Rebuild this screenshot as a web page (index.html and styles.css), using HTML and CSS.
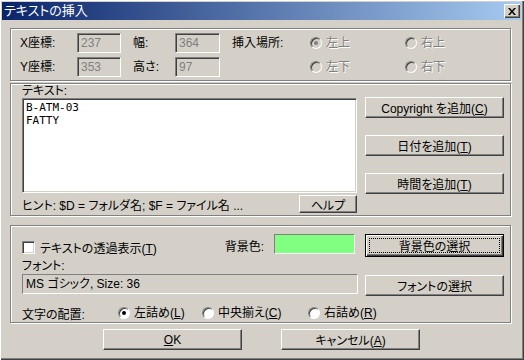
FILE: index.html
```html
<!DOCTYPE html>
<html lang="ja">
<head>
<meta charset="utf-8">
<title>テキストの挿入</title>
<link rel="stylesheet" href="styles.css">
</head>
<body>
<div class="window">
  <div class="titlebar">
    <span class="title">テキストの挿入</span>
    <span class="close"><svg width="8" height="7" viewBox="0 0 8 7"><path d="M0 0h2l2 2.5L6 0h2L5 3.5 8 7H6L4 4.5 2 7H0l3-3.5z" fill="#000"/></svg></span>
  </div>
  <div class="content">
    <div class="group pos">
      <span class="lbl">X座標:</span>
      <span class="edit disabled">237</span>
      <span></span>
      <span class="lbl">幅:</span>
      <span class="edit disabled">364</span>
      <span></span>
      <span class="lbl">挿入場所:</span>
      <span class="radio-item dis"><span class="radio checked"></span><span>左上</span></span>
      <span class="radio-item dis"><span class="radio"></span><span>右上</span></span>

      <span class="lbl">Y座標:</span>
      <span class="edit disabled">353</span>
      <span></span>
      <span class="lbl">高さ:</span>
      <span class="edit disabled">97</span>
      <span></span>
      <span></span>
      <span class="radio-item dis"><span class="radio"></span><span>左下</span></span>
      <span class="radio-item dis"><span class="radio"></span><span>右下</span></span>
    </div>

    <div class="group textgrp">
      <div class="leftcol">
        <div class="lbl-row">テキスト:</div>
        <div class="textbox">B-ATM-03
FATTY</div>
        <div class="hint-row">
          <span>ヒント: $D = フォルダ名; $F = ファイル名 ...</span>
          <span class="btn help">ヘルプ</span>
        </div>
      </div>
      <div class="rightcol">
        <span class="btn wide"><span>Copyright を追加(<u>C</u>)</span></span>
        <span class="btn wide"><span>日付を追加(<u>T</u>)</span></span>
        <span class="btn wide"><span>時間を追加(<u>T</u>)</span></span>
      </div>
    </div>

    <div class="group optgrp">
      <div class="row row1">
        <div class="left l1">
          <span class="checkbox"></span>
          <span class="cblabel">テキストの透過表示(<u>T</u>)</span>
          <span class="bglabel">背景色:</span>
          <span class="swatch"></span>
        </div>
        <span class="btn wide default"><span class="focus">背景色の選択</span></span>
      </div>
      <div class="fontlabel">フォント:</div>
      <div class="row row3">
        <div class="fontbox">MS ゴシック, Size: 36</div>
        <span class="btn wide fontbtn">フォントの選択</span>
      </div>
      <div class="row row4">
        <span class="alignlbl">文字の配置:</span>
        <span class="radio-item a1"><span class="radio checked"></span><span>左詰め(<u>L</u>)</span></span>
        <span class="radio-item a2"><span class="radio"></span><span>中央揃え(<u>C</u>)</span></span>
        <span class="radio-item"><span class="radio"></span><span>右詰め(<u>R</u>)</span></span>
      </div>
    </div>

    <div class="actions">
      <span class="btn wide"><span><u>O</u>K</span></span>
      <span class="btn wide"><span>キャンセル(<u>A</u>)</span></span>
    </div>
  </div>
</div>
</body>
</html>
```
FILE: styles.css
```css
html, body {
  margin: 0;
  padding: 0;
}
body {
  width: 524px;
  height: 360px;
  overflow: hidden;
  background: #d4d0c8;
  font-family: "Liberation Sans", "Noto Sans CJK JP", sans-serif;
  font-size: 12px;
  font-feature-settings: "palt";
  color: #000;
}
.window {
  box-sizing: border-box;
  width: 524px;
  height: 360px;
  padding: 2px 3px 3px 2px;
  background: #d4d0c8;
  box-shadow: inset 1px 1px #fff, inset -1px -1px #404040, inset -2px -2px #808080;
}
.titlebar {
  height: 18px;
  display: flex;
  align-items: center;
  justify-content: space-between;
  padding: 0 1px 0 2px;
  background: linear-gradient(to right, #0a246a, #a6caf0);
  color: #fff;
}
.title {
  font-size: 13px;
  line-height: 18px;
}
.close {
  box-sizing: border-box;
  width: 16px;
  height: 14px;
  background: #d4d0c8;
  display: flex;
  align-items: center;
  justify-content: center;
  box-shadow: inset 1px 1px #fff, inset -1px -1px #404040, inset -2px -2px #808080;
}
.content {
  padding: 8px 10px 0 8px;
}
.group {
  box-sizing: border-box;
  border: 1px solid #808080;
  box-shadow: inset 1px 1px #fff, 1px 1px #fff;
}
.pos {
  height: 53px;
  display: grid;
  grid-template-columns: 57px 44px 12px 42px 45px 12px 78px 95px 95px;
  grid-template-rows: 20px 20px;
  row-gap: 4px;
  padding: 4px 0 0 9px;
  align-items: center;
}
.lbl {
  line-height: 14px;
}
.edit {
  box-sizing: border-box;
  height: 20px;
  line-height: 18px;
  padding-left: 3px;
  border: 1px solid;
  border-color: #808080 #fff #fff #808080;
  box-shadow: inset 1px 1px #404040, inset -1px -1px #d4d0c8;
  background: #fff;
}
.edit.disabled {
  background: #d4d0c8;
  color: #808080;
}
.radio-item {
  display: flex;
  align-items: center;
  gap: 4px;
  line-height: 14px;
  white-space: nowrap;
}
.radio-item.dis {
  color: #808080;
  text-shadow: 1px 1px #fff;
}
.radio {
  box-sizing: border-box;
  width: 12px;
  height: 12px;
  border-radius: 50%;
  border: 1px solid;
  border-color: #808080 #fff #fff #808080;
  box-shadow: inset 1px 1px #404040;
  background: #fff;
  display: flex;
  align-items: center;
  justify-content: center;
  flex: none;
}
.dis .radio {
  background: #d4d0c8;
}
.radio.checked::before {
  content: "";
  width: 4px;
  height: 4px;
  border-radius: 50%;
  background: #000;
}
.dis .radio.checked::before {
  background: #808080;
}

.textgrp {
  margin-top: 2px;
  height: 133px;
  display: flex;
  padding: 1px 6px 0 11px;
  gap: 8px;
}
.leftcol {
  width: 335px;
  display: flex;
  flex-direction: column;
}
.lbl-row {
  height: 13px;
  line-height: 13px;
}
.textbox {
  box-sizing: border-box;
  height: 95px;
  background: #fff;
  border: 1px solid;
  border-color: #808080 #fff #fff #808080;
  box-shadow: inset 1px 1px #404040, inset -1px -1px #d4d0c8;
  padding: 2px 3px;
  font-family: "DejaVu Sans Mono", monospace;
  font-size: 11px;
  line-height: 13px;
  white-space: pre;
  font-feature-settings: normal;
}
.hint-row {
  margin-top: 2px;
  height: 18px;
  display: flex;
  align-items: center;
  justify-content: space-between;
}
.btn {
  box-sizing: border-box;
  height: 21px;
  display: flex;
  align-items: center;
  justify-content: center;
  background: #d4d0c8;
  border: 1px solid;
  border-color: #fff #404040 #404040 #fff;
  box-shadow: inset -1px -1px #808080;
  white-space: nowrap;
}
.help {
  width: 58px;
  height: 18px;
}
.wide {
  width: 139px;
}
.rightcol {
  display: flex;
  flex-direction: column;
  gap: 17px;
  padding-top: 12px;
}

.optgrp {
  margin-top: 9px;
  height: 98px;
  padding: 8px 6px 0 11px;
  display: flex;
  flex-direction: column;
}
.row {
  display: flex;
  gap: 7px;
}
.left {
  width: 336px;
}
.l1 {
  display: flex;
  align-items: center;
}
.row1 {
  height: 23px;
}
.checkbox {
  box-sizing: border-box;
  width: 13px;
  height: 13px;
  background: #fff;
  border: 1px solid;
  border-color: #808080 #fff #fff #808080;
  box-shadow: inset 1px 1px #404040, inset -1px -1px #d4d0c8;
  margin-top: 4px;
}
.cblabel {
  margin-left: 5px;
  margin-top: 4px;
}
.bglabel {
  margin-left: auto;
  margin-right: 10px;
}
.swatch {
  box-sizing: border-box;
  width: 81px;
  height: 20px;
  align-self: flex-start;
  background: #80ff80;
  border: 1px solid;
  border-color: #808080 #fff #fff #808080;
  margin-right: 3px;
}
.default {
  height: 23px;
  border: 1px solid #000;
  box-shadow: inset 1px 1px #fff, inset -1px -1px #404040, inset -2px -2px #808080;
  padding: 3px;
}
.focus {
  flex: 1;
  align-self: stretch;
  display: flex;
  align-items: center;
  justify-content: center;
  border: 1px dotted #000;
}
.fontlabel {
  margin-top: 2px;
  height: 14px;
  line-height: 14px;
}
.row3 {
  margin-top: 1px;
  align-items: flex-start;
}
.fontbox {
  box-sizing: border-box;
  width: 336px;
  height: 20px;
  line-height: 18px;
  padding-left: 3px;
  border: 1px solid;
  border-color: #808080 #fff #fff #808080;
}
.fontbtn {
  margin-top: 1px;
}
.row4 {
  margin-top: 10px;
  gap: 0;
  align-items: center;
  height: 14px;
}
.alignlbl {
  width: 96px;
}
.a1 {
  width: 84px;
}
.a2 {
  width: 106px;
}
.actions {
  margin-top: 6px;
  display: flex;
  justify-content: center;
  gap: 39px;
  padding-left: 2px;
}
u {
  text-decoration: underline;
}
```
